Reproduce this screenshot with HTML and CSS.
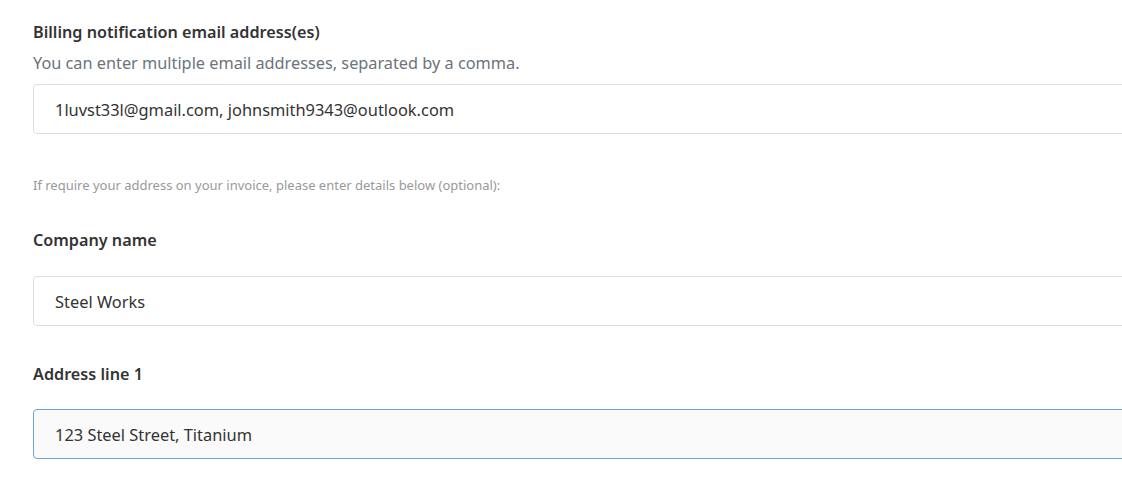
FILE: index.html
```html
<!DOCTYPE html>
<html lang="en">

<head>
    <meta charset="UTF-8">
    <meta name="viewport" content="width=device-width, initial-scale=1.0">
    <title>Billing details</title>

    <link rel="stylesheet" href="styles.css">
</head>

<body>

    <form class="billing">

        <div class="field">
            <label for="emails">Billing notification email address(es)</label>
            <p class="help">You can enter multiple email addresses, separated by a comma.</p>
            <input type="text" id="emails" value="1luvst33l@gmail.com, johnsmith9343@outlook.com">
        </div>

        <p class="note">If require your address on your invoice, please enter details below (optional):</p>

        <div class="field company">
            <label for="company">Company name</label>
            <input type="text" id="company" value="Steel Works">
        </div>

        <div class="field address">
            <label for="address1">Address line 1</label>
            <input type="text" id="address1" class="focused" value="123 Steel Street, Titanium">
        </div>

    </form>

</body>

</html>
```

FILE: styles.css
```css
* {
    margin: 0;
    padding: 0;
    box-sizing: border-box;
}

body {
    background-color: #fff;
    color: #333;
    font-family: "Noto Sans", "Open Sans", sans-serif;
    overflow: hidden;
}

/* the inputs run on past the right edge of the window */
.billing {
    width: 100%;
    overflow: hidden;
    padding: 20px 0 0 33px;
    display: flex;
    flex-direction: column;
}

.field {
    display: flex;
    flex-direction: column;
}

label {
    font-size: 16.2px;
    font-weight: 600;
    line-height: 24px;
    color: #333;
}

.help {
    margin-top: 7px;
    font-size: 16.3px;
    line-height: 24px;
    color: #6b737b;
}

input {
    margin-top: 9px;
    height: 50px;
    width: calc(100% + 20px);
    padding: 0 21px;
    border: 1px solid #ddd;
    border-radius: 4px;
    font-family: inherit;
    font-size: 16.4px;
    color: #333;
    background-color: #fff;
    outline: none;
}

.note {
    margin-top: 42px;
    font-size: 13px;
    line-height: 18px;
    color: #999;
}

.company {
    margin-top: 34px;
}

.company input {
    margin-top: 24px;
}

.address {
    margin-top: 36px;
}

.address input {
    margin-top: 23px;
}

input.focused {
    border-color: #6ea2d2;
    background-color: #fafafa;
}
```
